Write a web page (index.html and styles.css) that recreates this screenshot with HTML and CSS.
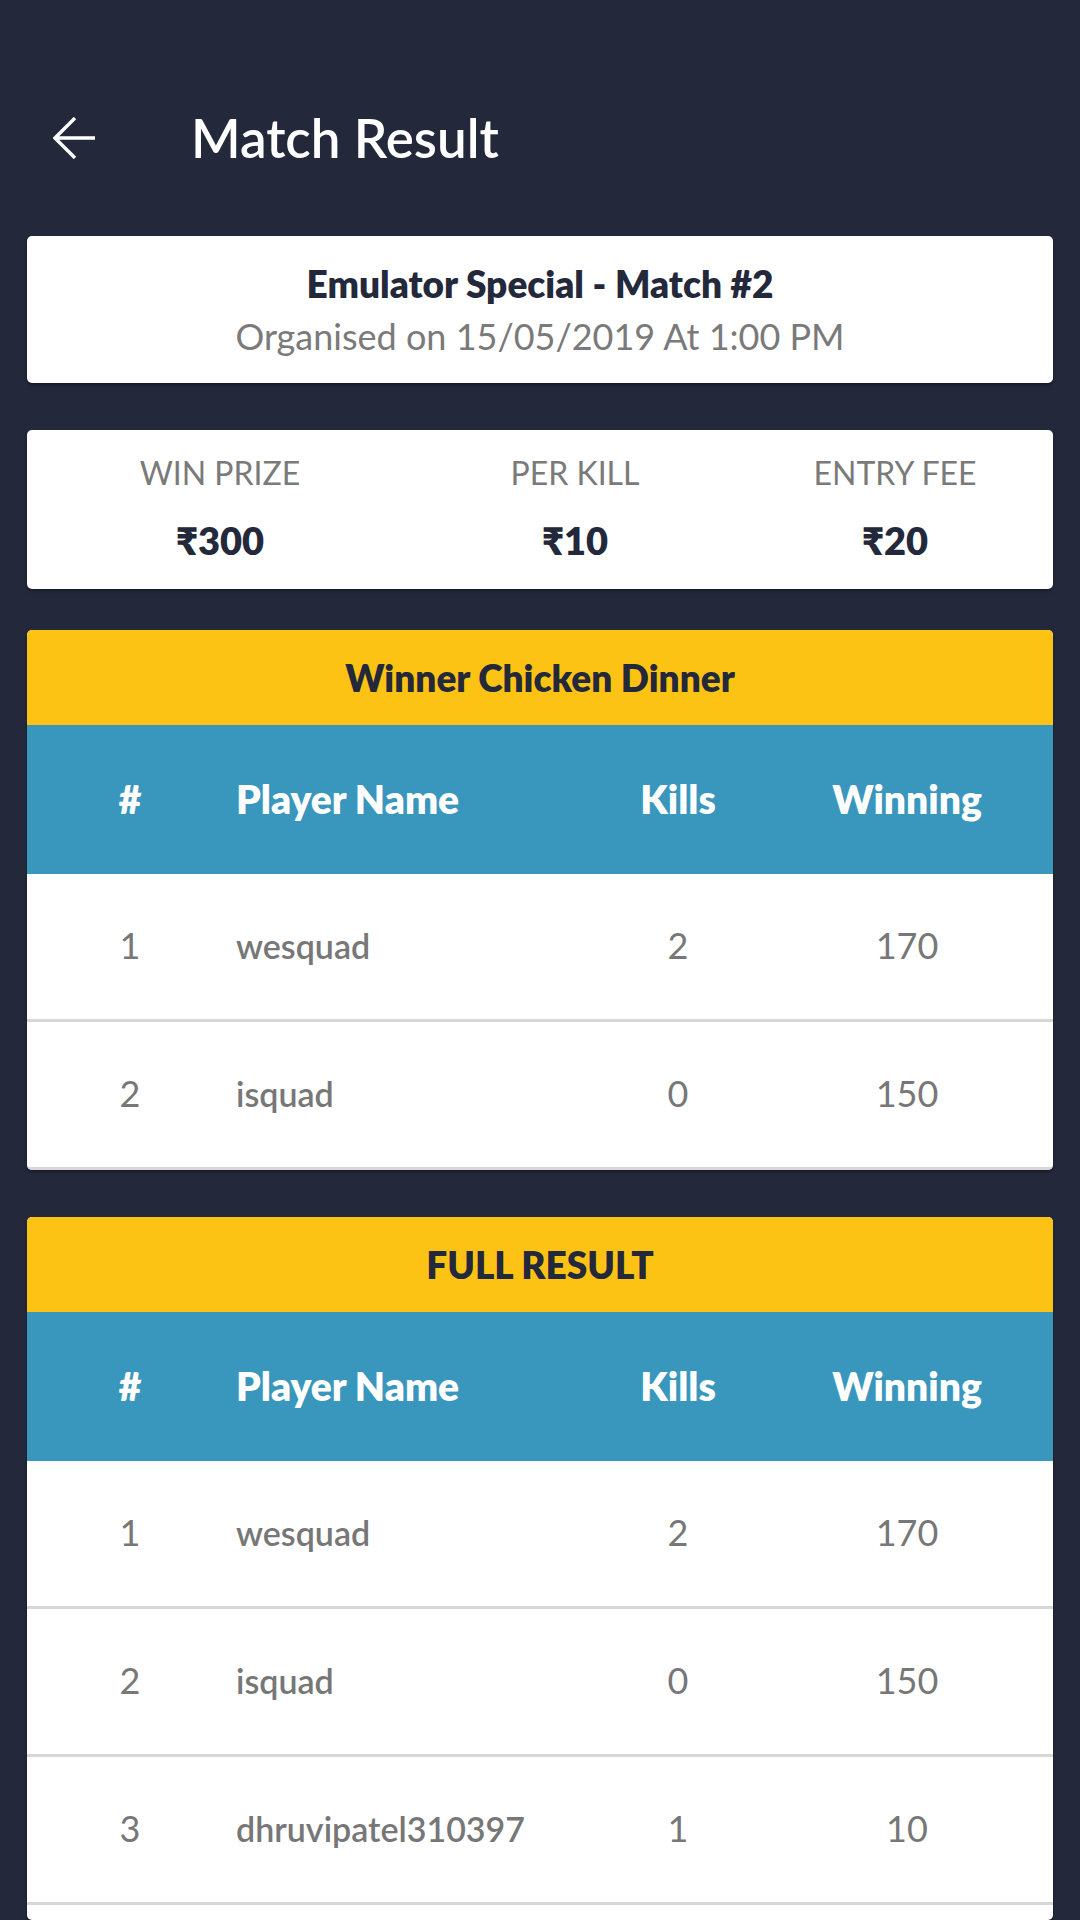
FILE: index.html
```html
<!DOCTYPE html>
<html lang="en">
<head>
<meta charset="utf-8">
<title>Match Result</title>
<link rel="stylesheet" href="styles.css">
</head>
<body>
<div class="page">
  <div class="statusbar"></div>
  <header class="toolbar">
    <svg class="back" width="42" height="42" viewBox="0 0 42 42" aria-hidden="true">
      <path d="M42 21 H2 M22 1 L2 21 L22 41" fill="none" stroke="#ffffff" stroke-width="3.4" stroke-linecap="butt" stroke-linejoin="miter"/>
    </svg>
    <h1 class="title">Match Result</h1>
  </header>

  <main class="content">
    <section class="card info">
      <div class="info-title">Emulator Special - Match #2</div>
      <div class="info-sub">Organised on 15/05/2019 At 1:00 PM</div>
    </section>

    <section class="card stats">
      <div class="stat">
        <div class="stat-label">WIN PRIZE</div>
        <div class="stat-value">₹300</div>
      </div>
      <div class="stat">
        <div class="stat-label">PER KILL</div>
        <div class="stat-value">₹10</div>
      </div>
      <div class="stat">
        <div class="stat-label">ENTRY FEE</div>
        <div class="stat-value">₹20</div>
      </div>
    </section>

    <section class="card table">
      <div class="table-title">Winner Chicken Dinner</div>
      <div class="row head">
        <div class="c-num">#</div>
        <div class="c-name">Player Name</div>
        <div class="c-kills">Kills</div>
        <div class="c-win">Winning</div>
      </div>
      <div class="row">
        <div class="c-num">1</div>
        <div class="c-name">wesquad</div>
        <div class="c-kills">2</div>
        <div class="c-win">170</div>
      </div>
      <div class="row">
        <div class="c-num">2</div>
        <div class="c-name">isquad</div>
        <div class="c-kills">0</div>
        <div class="c-win">150</div>
      </div>
    </section>

    <section class="card table last">
      <div class="table-title">FULL RESULT</div>
      <div class="row head">
        <div class="c-num">#</div>
        <div class="c-name">Player Name</div>
        <div class="c-kills">Kills</div>
        <div class="c-win">Winning</div>
      </div>
      <div class="row">
        <div class="c-num">1</div>
        <div class="c-name">wesquad</div>
        <div class="c-kills">2</div>
        <div class="c-win">170</div>
      </div>
      <div class="row">
        <div class="c-num">2</div>
        <div class="c-name">isquad</div>
        <div class="c-kills">0</div>
        <div class="c-win">150</div>
      </div>
      <div class="row">
        <div class="c-num">3</div>
        <div class="c-name">dhruvipatel310397</div>
        <div class="c-kills">1</div>
        <div class="c-win">10</div>
      </div>
    </section>
  </main>
</div>
</body>
</html>
```

FILE: styles.css
```css
html, body {
  margin: 0;
  padding: 0;
  background: #23283a;
  font-family: Lato, "Open Sans", "DejaVu Sans", sans-serif;
}

.page {
  height: 1920px;
  overflow: hidden;
  display: flex;
  flex-direction: column;
}

.statusbar {
  height: 63px;
  flex: none;
}

.toolbar {
  height: 150px;
  flex: none;
  display: flex;
  align-items: center;
  padding-left: 53px;
}

.back {
  display: block;
  flex: none;
}

.title {
  margin: 0 0 0 96px;
  color: #ffffff;
  font-size: 53px;
  font-weight: 600;
  line-height: 1.2;
}

.content {
  flex: 1;
  min-height: 0;
  display: flex;
  flex-direction: column;
  padding: 23px 27px 0;
}

.card {
  background: #ffffff;
  border-radius: 5px;
  box-shadow: 0 2px 3px rgba(0, 0, 0, 0.35);
  overflow: hidden;
  flex: none;
}

/* info card */
.info {
  padding: 26px 0 24px;
  text-align: center;
}

.info-title {
  color: #23283a;
  font-size: 37px;
  font-weight: 800;
  line-height: 1.2;
  margin-bottom: 9px;
}

.info-sub {
  color: #7a7a7a;
  font-size: 36px;
  font-weight: 400;
  line-height: 1.2;
}

/* stats card */
.stats {
  margin-top: 47px;
  display: grid;
  grid-template-columns: 386px 324px 1fr;
  padding: 24px 0 25px;
  text-align: center;
}

.stat-label {
  color: #7a7a7a;
  font-size: 32px;
  font-weight: 400;
  line-height: 1.2;
}

.stat-value {
  margin-top: 26px;
  color: #23283a;
  font-size: 38px;
  font-weight: 800;
  line-height: 1.2;
}

/* tables */
.table {
  margin-top: 41px;
}

.table.last {
  margin-top: 47px;
  flex: 1;
}

.table-title {
  height: 95px;
  background: #fdc314;
  color: #23283a;
  font-size: 37px;
  font-weight: 800;
  display: flex;
  align-items: center;
  justify-content: center;
}

.row {
  display: grid;
  grid-template-columns: 206px 362px 166px 1fr;
  align-items: center;
  height: 145px;
  border-bottom: 3px solid #d7d7d7;
  color: #777777;
  font-size: 36px;
  font-weight: 400;
  line-height: 1.2;
}

.row.head {
  height: 149px;
  border-bottom: 0;
  background: #3996bd;
  color: #ffffff;
  font-size: 39px;
  font-weight: 800;
}

.c-num,
.c-kills,
.c-win {
  text-align: center;
}

.c-name {
  padding-left: 3px;
  font-size: 34px;
  font-weight: 600;
  white-space: nowrap;
}

.row.head .c-name {
  font-size: 39px;
  font-weight: 800;
}
```
